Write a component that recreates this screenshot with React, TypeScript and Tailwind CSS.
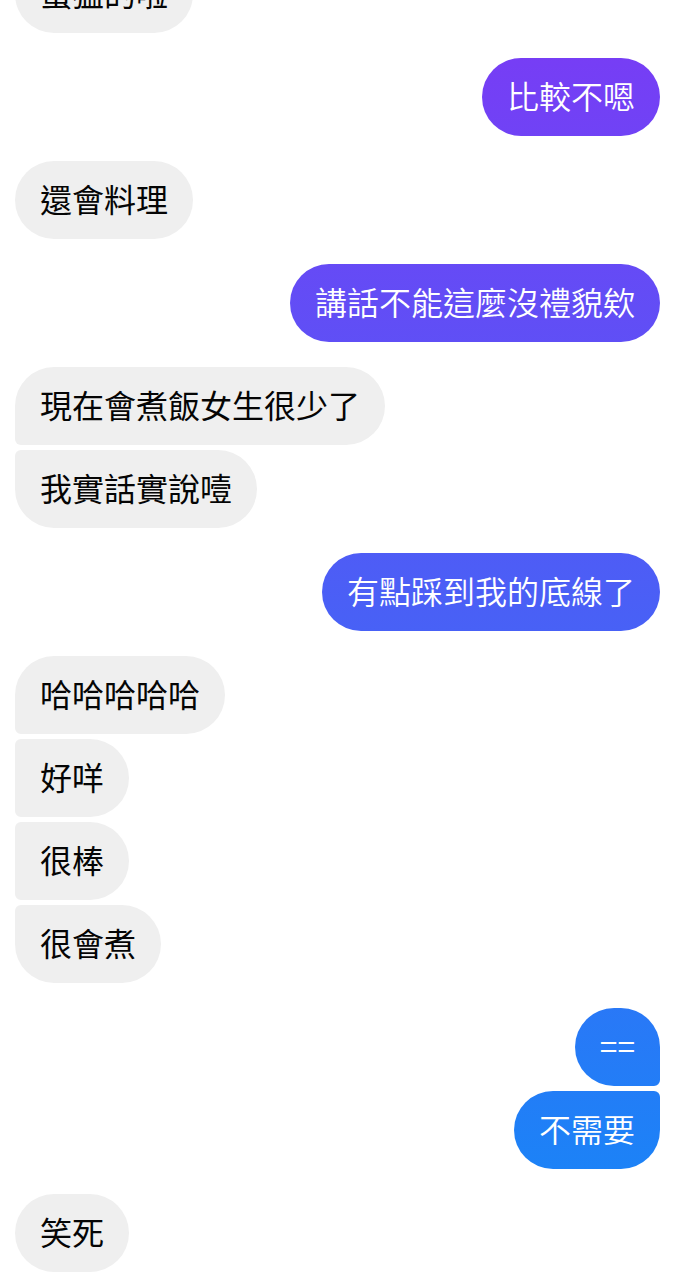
const messages = [
  { from: 'them', text: '蠻猛的啦', shape: 'single', gap: 'none' },
  { from: 'me', text: '比較不嗯', shape: 'single', gap: 'group' },
  { from: 'them', text: '還會料理', shape: 'single', gap: 'group' },
  { from: 'me', text: '講話不能這麼沒禮貌欸', shape: 'single', gap: 'group' },
  { from: 'them', text: '現在會煮飯女生很少了', shape: 'first', gap: 'group' },
  { from: 'them', text: '我實話實說噎', shape: 'last', gap: 'inner' },
  { from: 'me', text: '有點踩到我的底線了', shape: 'single', gap: 'group' },
  { from: 'them', text: '哈哈哈哈哈', shape: 'first', gap: 'group' },
  { from: 'them', text: '好咩', shape: 'middle', gap: 'inner' },
  { from: 'them', text: '很棒', shape: 'middle', gap: 'inner' },
  { from: 'them', text: '很會煮', shape: 'last', gap: 'inner' },
  { from: 'me', text: '==', shape: 'first', gap: 'group' },
  { from: 'me', text: '不需要', shape: 'last', gap: 'inner' },
  { from: 'them', text: '笑死', shape: 'single', gap: 'group' },
]

const themCorners: Record<string, string> = {
  single: 'rounded-[39px]',
  first: 'rounded-[39px] rounded-bl-[6px]',
  middle: 'rounded-[39px] rounded-tl-[6px] rounded-bl-[6px]',
  last: 'rounded-[39px] rounded-tl-[6px]',
}

const meCorners: Record<string, string> = {
  single: 'rounded-[39px]',
  first: 'rounded-[39px] rounded-br-[6px]',
  middle: 'rounded-[39px] rounded-tr-[6px] rounded-br-[6px]',
  last: 'rounded-[39px] rounded-tr-[6px]',
}

const gaps: Record<string, string> = {
  none: 'mt-0',
  group: 'mt-[25px]',
  inner: 'mt-[5px]',
}

export default function App() {
  return (
    <div
      className="h-[1280px] w-full overflow-hidden bg-white"
      style={{ fontFamily: '"Noto Sans CJK TC", "Noto Sans", sans-serif' }}
    >
      {/* message list, scrolled so the first bubble is cut off */}
      <div className="-mt-[45px] flex flex-col pl-[15px] pr-[16px]">
        {messages.map((m, i) => (
          <div
            key={i}
            className={`flex ${m.from === 'me' ? 'justify-end' : 'justify-start'} ${gaps[m.gap]}`}
          >
            {m.from === 'me' ? (
              <div
                className={`flex h-[78px] items-center whitespace-nowrap bg-linear-to-b/srgb from-[#7b3af5] to-[#1389f7] bg-fixed px-[25px] pb-[4px] text-[32px] font-[350] leading-[40px] text-white ${meCorners[m.shape]}`}
              >
                {m.text}
              </div>
            ) : (
              <div
                className={`flex h-[78px] items-center whitespace-nowrap bg-[#efefef] px-[25px] pb-[4px] text-[32px] font-normal leading-[40px] text-[#050505] ${themCorners[m.shape]}`}
              >
                {m.text}
              </div>
            )}
          </div>
        ))}
      </div>
    </div>
  )
}
